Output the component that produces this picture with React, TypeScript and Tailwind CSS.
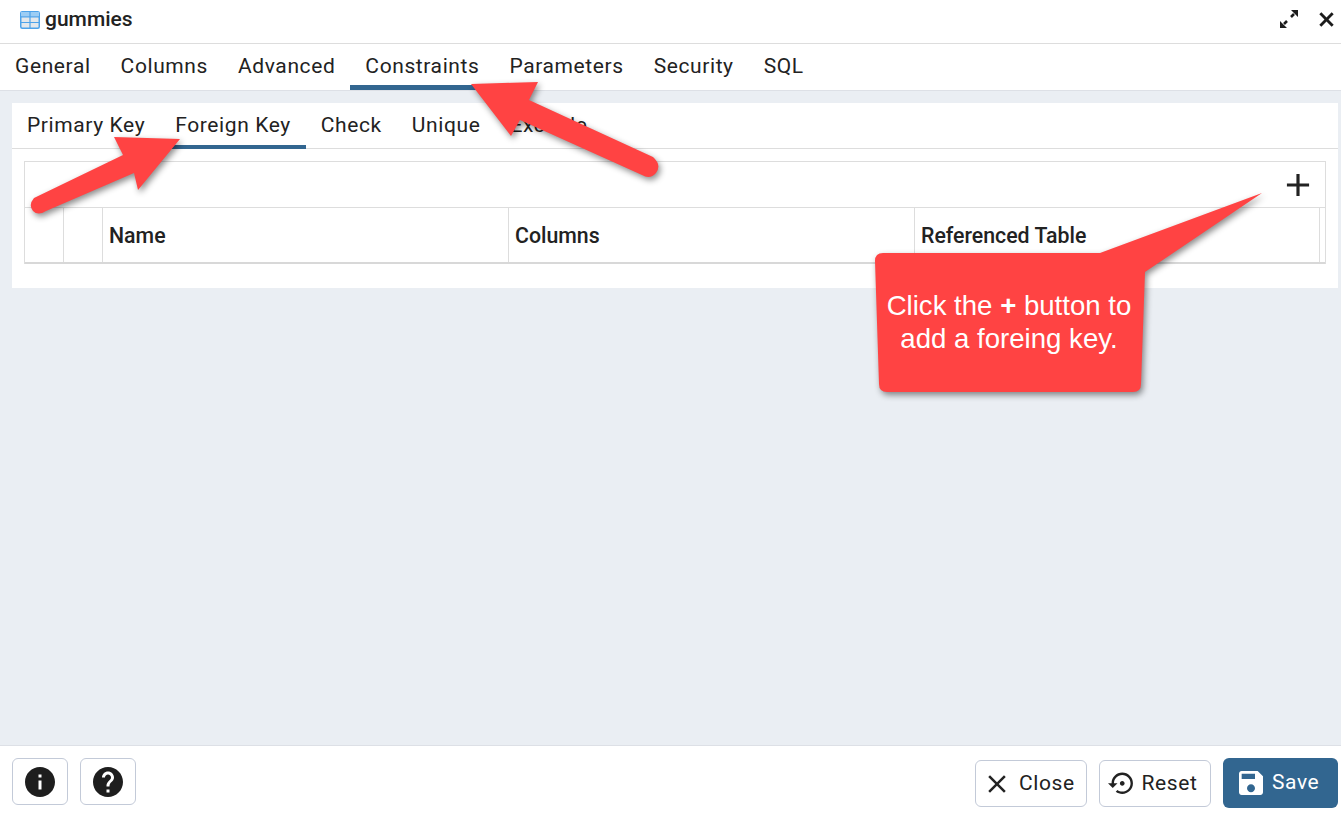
const mainTabs = ['General', 'Columns', 'Advanced', 'Constraints', 'Parameters', 'Security', 'SQL'];
const subTabs = ['Primary Key', 'Foreign Key', 'Check', 'Unique', 'Exclude'];

function Icon({ d, className = '' }: { d: string; className?: string }) {
  return (
    <svg viewBox="0 0 24 24" className={className} fill="currentColor">
      <path d={d} />
    </svg>
  );
}

function TableIcon() {
  return (
    <svg viewBox="0 0 20 18" className="w-5 h-[18px] shrink-0">
      <rect x="0.75" y="0.75" width="18.5" height="16.5" rx="1.5" fill="#e4e8ec" stroke="#4ea3ea" strokeWidth="1.5" />
      <path d="M1 1h18v4.5H1z" fill="#9ccdf4" />
      <path d="M1 5.8h18M1 11.5h18M10 1v16" stroke="#4ea3ea" strokeWidth="1.2" />
    </svg>
  );
}

function ExpandIcon() {
  return (
    <svg viewBox="0 0 20 20" className="w-5 h-5" fill="none">
      <path d="M12 1h7v7zM8 19H1v-7z" fill="#1c1c1c" />
      <path d="M15 5l-3 3M5 15l3-3" stroke="#1c1c1c" strokeWidth="2.6" />
    </svg>
  );
}

function Annotations() {
  return (
    <svg viewBox="0 0 1341 817" className="absolute inset-0 w-[1341px] h-[817px] pointer-events-none drop-shadow-[2px_3px_3px_rgba(0,0,0,0.45)]">
      {/* Constraints arrow */}
      <path d="M471 84 L538 82 L529 100 L653 157 Q662 165 656 173 Q650 180 642 175 L520 120 L511 136 Z" fill="#ff4343" />
      {/* Foreign key arrow */}
      <path d="M180 139 L114 137 L123 155 L34 198 Q28 205 33 211 Q38 216 46 211 L134 173 L138 190 Z" fill="#ff4343" />
      {/* Callout */}
      <path
        d="M883 253 H1100 L1262 193 L1145 272 L1141 384 Q1141 392 1133 392 H887 Q879 392 879 384 L875 261 Q875 253 883 253 Z"
        fill="#ff4343"
      />
    </svg>
  );
}

export default function App() {
  return (
    <div className="relative w-[1341px] h-[817px] overflow-hidden flex flex-col bg-white text-[#222222] font-['Roboto',sans-serif]">
      {/* Title bar */}
      <div className="h-[44px] shrink-0 flex items-center justify-between pl-5 pr-[5px] border-b border-[#dddddd]">
        <div className="flex items-center gap-[5px] -mt-1">
          <TableIcon />
          <span className="text-[21px] font-medium leading-none pb-[1px]">gummies</span>
        </div>
        <div className="flex items-center gap-[16px] -mt-[6px] pr-[1px]">
          <ExpandIcon />
          <Icon d="M19.5 6.6 17.4 4.5 12 9.9 6.6 4.5 4.5 6.6 9.9 12l-5.4 5.4 2.1 2.1 5.4-5.4 5.4 5.4 2.1-2.1-5.4-5.4z" className="w-[23px] h-[23px] text-[#1c1c1c] -mr-[3px] mt-[1px]" />
        </div>
      </div>

      {/* Main tabs */}
      <div className="h-[47px] shrink-0 flex border-b border-[#dde0e6]">
        {mainTabs.map((t) => (
          <div
            key={t}
            className={`px-[15px] flex items-center text-[21px] tracking-[0.6px] border-b-[5px] pt-[4px] ${
              t === 'Constraints' ? 'border-[#326690]' : 'border-transparent'
            }`}
          >
            {t}
          </div>
        ))}
      </div>

      {/* Body */}
      <div className="flex-1 bg-[#eaeef3] pt-3 pl-3 pr-[3px]">
        <div className="bg-white h-[185px] flex flex-col">
          <div className="h-[46px] shrink-0 flex border-b border-[#dddddd]">
            {subTabs.map((t) => (
              <div
                key={t}
                className={`px-[15px] flex items-center text-[21px] tracking-[0.6px] border-b-[4px] mb-[-1px] pt-[3px] ${
                  t === 'Foreign Key' ? 'border-[#326690]' : 'border-transparent'
                }`}
              >
                {t}
              </div>
            ))}
          </div>
          <div className="mt-3 mx-3 border border-[#dddddd] border-b-0 h-[103px] flex flex-col">
            <div className="h-[46px] shrink-0 flex items-center justify-end pr-[8px] border-b border-[#dddddd]">
              <Icon d="M19 13h-6v6h-2v-6H5v-2h6V5h2v6h6v2z" className="w-[38px] h-[38px] text-[#222222]" />
            </div>
            <div className="flex-1 grid grid-cols-[39px_39px_406px_406px_405px_1fr] border-b-2 border-[#d8d8d8] text-[21.3px] font-medium">
              <div className="border-r border-[#dddddd]" />
              <div className="border-r border-[#dddddd]" />
              <div className="border-r border-[#dddddd] pl-[6px] pt-[1px] flex items-center">Name</div>
              <div className="border-r border-[#dddddd] pl-[6px] pt-[1px] flex items-center">Columns</div>
              <div className="border-r border-[#dddddd] pl-[6px] pt-[1px] flex items-center">Referenced Table</div>
              <div />
            </div>
          </div>
        </div>
      </div>

      {/* Footer */}
      <div className="h-[72px] shrink-0 border-t border-[#dde0e6] flex justify-between pl-3 pr-[3px] pt-3">
        <div className="flex gap-3">
          <button className="w-14 h-[47px] rounded-md border border-[#c3cad8] flex items-center justify-center">
            <Icon d="M12 2C6.48 2 2 6.48 2 12s4.48 10 10 10 10-4.48 10-10S17.52 2 12 2zm1 15h-2v-6h2v6zm0-8h-2V7h2v2z" className="w-9 h-9 text-[#1e1e1e]" />
          </button>
          <button className="w-14 h-[47px] rounded-md border border-[#c3cad8] flex items-center justify-center">
            <Icon d="M12 2C6.48 2 2 6.48 2 12s4.48 10 10 10 10-4.48 10-10S17.52 2 12 2zm1 17h-2v-2h2v2zm2.07-7.75l-.9.92C13.45 12.9 13 13.5 13 15h-2v-.5c0-1.1.45-2.1 1.17-2.83l1.24-1.26c.37-.36.59-.86.59-1.41 0-1.1-.9-2-2-2s-2 .9-2 2H8c0-2.21 1.79-4 4-4s4 1.79 4 4c0 .88-.36 1.68-.93 2.25z" className="w-9 h-9 text-[#1e1e1e]" />
          </button>
        </div>
        <div className="flex gap-3 items-start">
          <button className="mt-[2px] w-[112px] h-[47px] rounded-md border border-[#c3cad8] flex items-center pl-[6px] gap-[7px] text-[21px] tracking-[0.6px]">
            <Icon d="M19 6.41 17.59 5 12 10.59 6.41 5 5 6.41 10.59 12 5 17.59 6.41 19 12 13.41 17.59 19 19 17.59 13.41 12z" className="w-[30px] h-[30px] text-[#222222]" />
            Close
          </button>
          <button className="mt-[2px] w-[112px] h-[47px] rounded-md border border-[#c3cad8] flex items-center pl-[8px] gap-[5px] text-[21px] tracking-[0.6px]">
            <Icon d="M14 12c0-1.1-.9-2-2-2s-2 .9-2 2 .9 2 2 2 2-.9 2-2zm-2-9c-4.97 0-9 4.03-9 9H0l4 4 4-4H5c0-3.87 3.13-7 7-7s7 3.13 7 7-3.13 7-7 7c-1.51 0-2.91-.49-4.06-1.3l-1.42 1.44C8.04 20.3 9.94 21 12 21c4.97 0 9-4.03 9-9s-4.03-9-9-9z" className="w-[28.5px] h-[28.5px] text-[#222222]" />
            Reset
          </button>
          <button className="w-[115px] h-[50px] rounded-md bg-[#326690] text-white flex items-center pl-[12px] gap-[5px] text-[21px] tracking-[0.6px]">
            <Icon d="M17 3H5c-1.11 0-2 .9-2 2v14c0 1.1.89 2 2 2h14c1.1 0 2-.9 2-2V7l-4-4zm-5 16c-1.66 0-3-1.34-3-3s1.34-3 3-3 3 1.34 3 3-1.34 3-3 3zm3-10H5V5h10v4z" className="w-8 h-8" />
            Save
          </button>
        </div>
      </div>

      <Annotations />
      {/* Callout text */}
      <div className="absolute left-[878px] top-[289px] w-[262px] text-center text-white text-[27.6px] leading-[33px] font-['Liberation_Sans',sans-serif]">
        Click the <b>+</b> button to
        <br />
        add a foreing key.
      </div>
    </div>
  );
}
